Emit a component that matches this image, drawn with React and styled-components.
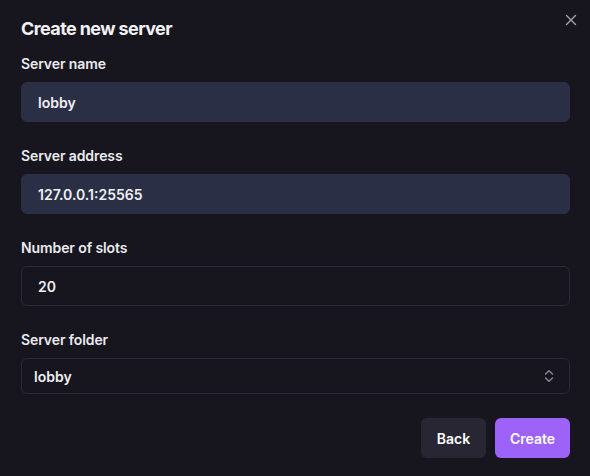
import React from "react";
import styled, { createGlobalStyle } from "styled-components";

const Global = createGlobalStyle`
  html, body { margin: 0; padding: 0; background: #17161f; }
  body { font-family: Inter, "Noto Sans", sans-serif; -webkit-font-smoothing: antialiased; }
  * { box-sizing: border-box; }
`;

const Dialog = styled.div`
  position: relative;
  width: 590px;
  height: 476px;
  background: #17161f;
  padding: 17px 20px 0 21px;
  display: flex;
  flex-direction: column;
`;

const Title = styled.h2`
  margin: 0;
  font-size: 18px;
  font-weight: 700;
  color: #f2f2f5;
  letter-spacing: -0.6px;
  line-height: 24px;
`;

const Close = styled.button`
  position: absolute;
  top: 12px;
  right: 11px;
  width: 16px;
  height: 16px;
  padding: 0;
  border: none;
  background: transparent;
  color: #a3a2ab;
  display: flex;
  align-items: center;
  justify-content: center;
`;

const Form = styled.div`
  display: flex;
  flex-direction: column;
  gap: 25px;
  margin-top: 14px;
`;

const Field = styled.div`
  display: flex;
  flex-direction: column;
  gap: 10px;
`;

const Label = styled.label`
  font-size: 14px;
  font-weight: 600;
  color: #ebebef;
  line-height: 17px;
  letter-spacing: -0.1px;
`;

const Input = styled.div`
  height: 40px;
  border-radius: 6px;
  padding: 0 16px;
  display: flex;
  align-items: center;
  font-size: 14px;
  font-weight: 600;
  color: #f0f0f4;
  background: ${(p) => (p.$filled ? "#2a2f45" : "transparent")};
  border: 1px solid ${(p) => (p.$filled ? "#2a2f45" : "#2b2a36")};
`;

const Select = styled.div`
  height: 36px;
  border-radius: 6px;
  padding: 0 14px 0 12px;
  display: flex;
  align-items: center;
  justify-content: space-between;
  font-size: 14px;
  font-weight: 600;
  color: #f0f0f4;
  border: 1px solid #2b2a36;
`;

const Chevrons = styled.span`
  color: #8a8996;
  display: flex;
`;

const Footer = styled.div`
  display: flex;
  justify-content: flex-end;
  gap: 9px;
  margin-top: 24px;
`;

const Button = styled.button`
  height: 40px;
  border: none;
  border-radius: 6px;
  padding: 0;
  font-family: inherit;
  font-size: 14px;
  font-weight: 600;
  color: #ffffff;
  background: ${(p) => (p.$primary ? "#9d62f8" : "#272632")};
  width: ${(p) => (p.$primary ? "75px" : "65px")};
`;

export default function App() {
  return (
    <>
      <Global />
      <Dialog>
        <Close aria-label="Close">
          <svg width="12" height="12" viewBox="0 0 12 12" fill="none" stroke="currentColor" strokeWidth="1.4" strokeLinecap="round">
            <path d="M1.5 1.5 L10.5 10.5 M10.5 1.5 L1.5 10.5" />
          </svg>
        </Close>
        <Title>Create new server</Title>
        <Form>
          <Field>
            <Label>Server name</Label>
            <Input $filled>lobby</Input>
          </Field>
          <Field>
            <Label>Server address</Label>
            <Input $filled>127.0.0.1:25565</Input>
          </Field>
          <Field>
            <Label>Number of slots</Label>
            <Input>20</Input>
          </Field>
          <Field>
            <Label>Server folder</Label>
            <Select>
              <span>lobby</span>
              <Chevrons>
                <svg width="12" height="14" viewBox="0 0 12 14" fill="none" stroke="currentColor" strokeWidth="1.4" strokeLinecap="round" strokeLinejoin="round">
                  <path d="M2.5 5 L6 1.8 L9.5 5" />
                  <path d="M2.5 9 L6 12.2 L9.5 9" />
                </svg>
              </Chevrons>
            </Select>
          </Field>
        </Form>
        <Footer>
          <Button>Back</Button>
          <Button $primary>Create</Button>
        </Footer>
      </Dialog>
    </>
  );
}
